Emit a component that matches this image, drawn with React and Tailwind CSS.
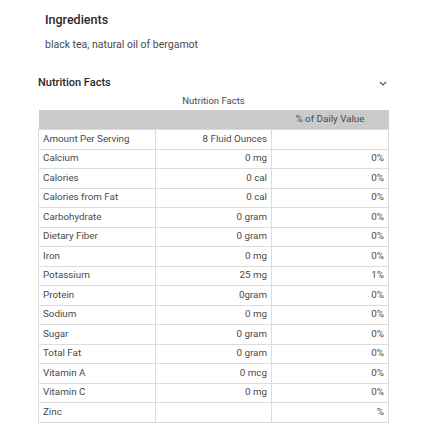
import React from "react"

const rows = [
  ["Amount Per Serving", "8 Fluid Ounces", ""],
  ["Calcium", "0 mg", "0%"],
  ["Calories", "0 cal", "0%"],
  ["Calories from Fat", "0 cal", "0%"],
  ["Carbohydrate", "0 gram", "0%"],
  ["Dietary Fiber", "0 gram", "0%"],
  ["Iron", "0 mg", "0%"],
  ["Potassium", "25 mg", "1%"],
  ["Protein", "0gram", "0%"],
  ["Sodium", "0 mg", "0%"],
  ["Sugar", "0 gram", "0%"],
  ["Total Fat", "0 gram", "0%"],
  ["Vitamin A", "0 mcg", "0%"],
  ["Vitamin C", "0 mg", "0%"],
  ["Zinc", "", "%"],
]

export default function App() {
  return (
    <div className="w-[430px] h-[430px] bg-white overflow-hidden text-[#333]" style={{ fontFamily: "Roboto, 'Liberation Sans', sans-serif" }}>
      <div className="pl-[45px] pt-[12px]">
        <h2 className="text-[12.5px] font-medium leading-[16px] text-[#2a2a2a]">Ingredients</h2>
        <p className="text-[10.5px] leading-[14px] mt-[10px] text-[#4a4a4a]">black tea, natural oil of bergamot</p>
      </div>
      <div className="mx-[38px] w-[351px] mt-[23px]">
        <div className="flex items-center justify-between h-[16px]">
          <h3 className="text-[11px] font-medium text-[#2a2a2a]">Nutrition Facts</h3>
          <svg width="8" height="5" viewBox="0 0 8 5" className="mr-[2px]">
            <path d="M1 1 L4 4 L7 1" fill="none" stroke="#555" strokeWidth="1.2" />
          </svg>
        </div>
        <div className="text-center text-[9.5px] leading-[12px] text-[#4a4a4a] mt-[4px] mb-[3px]">Nutrition Facts</div>
        <table className="w-full border-collapse text-[9.8px] text-[#4a4a4a] table-fixed">
          <thead>
            <tr className="bg-[#cacaca] h-[19.5px]">
              <th className="w-[117px]"></th>
              <th className="w-[116px]"></th>
              <th className="font-normal text-center px-[4px] text-[#4a4a4a]">% of Daily Value</th>
            </tr>
          </thead>
          <tbody>
            {rows.map((r) => (
              <tr key={r[0]} className="h-[19.5px]">
                <td className="border border-[#dcdcdc] px-[4px] text-left">{r[0]}</td>
                <td className="border border-[#dcdcdc] px-[4px] text-right">{r[1]}</td>
                <td className="border border-[#dcdcdc] px-[4px] text-right">{r[2]}</td>
              </tr>
            ))}
          </tbody>
        </table>
      </div>
    </div>
  )
}
